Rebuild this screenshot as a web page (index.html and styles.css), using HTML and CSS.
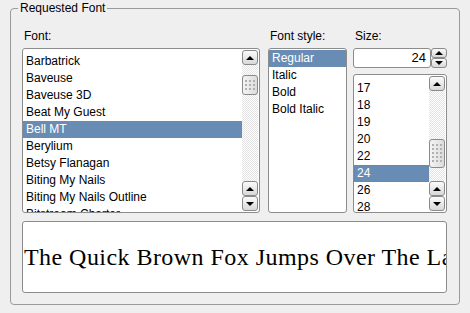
FILE: index.html
```html
<!DOCTYPE html>
<html lang="en">
<head>
  <meta charset="UTF-8" />
  <title>Requested Font</title>
  <link rel="stylesheet" href="styles.css">
</head>
<body>

  <fieldset class="group">
    <legend>Requested Font</legend>

    <div class="columns">
      <!-- FONT FAMILY -->
      <div class="col col-font">
        <label class="caption">Font:</label>
        <div class="listbox font-list">
          <ul class="items">
            <li>Barbatrick</li>
            <li>Baveuse</li>
            <li>Baveuse 3D</li>
            <li>Beat My Guest</li>
            <li class="sel">Bell MT</li>
            <li>Berylium</li>
            <li>Betsy Flanagan</li>
            <li>Biting My Nails</li>
            <li>Biting My Nails Outline</li>
            <li>Bitstream Charter</li>
          </ul>
          <div class="scrollbar">
            <span class="sb-btn up"></span>
            <span class="sb-track"><span class="sb-thumb" style="margin-top:10px;height:20px"></span></span>
            <span class="sb-btn up"></span>
            <span class="sb-btn down"></span>
          </div>
        </div>
      </div>

      <!-- FONT STYLE -->
      <div class="col col-style">
        <label class="caption">Font style:</label>
        <div class="listbox style-list">
          <ul class="items">
            <li class="sel">Regular</li>
            <li>Italic</li>
            <li>Bold</li>
            <li>Bold Italic</li>
          </ul>
        </div>
      </div>

      <!-- SIZE -->
      <div class="col col-size">
        <label class="caption">Size:</label>
        <div class="spinbox">
          <span class="spin-field">24</span>
          <span class="spin-btns">
            <span class="spin-btn up"></span>
            <span class="spin-btn down"></span>
          </span>
        </div>
        <div class="listbox size-list">
          <ul class="items">
            <li>17</li>
            <li>18</li>
            <li>19</li>
            <li>20</li>
            <li>22</li>
            <li class="sel focus">24</li>
            <li>26</li>
            <li>28</li>
          </ul>
          <div class="scrollbar">
            <span class="sb-btn up"></span>
            <span class="sb-track"><span class="sb-thumb" style="margin-top:48px;height:29px"></span></span>
            <span class="sb-btn up"></span>
            <span class="sb-btn down"></span>
          </div>
        </div>
      </div>
    </div>

    <div class="preview">The Quick Brown Fox Jumps Over The Lazy Dog</div>
  </fieldset>

</body>
</html>
```

FILE: styles.css
```css
body {
  margin: 0;
  background-color: #efefef;
  color: #000;
  font-family: "Liberation Sans", Arial, sans-serif;
  font-size: 12px;
}
.group {
  width: 450px;
  min-width: 0;
  box-sizing: border-box;
  margin: 1px 0 0 10px;
  padding: 13px 12px 11px 11px;
  border: 1px solid #9a9a9a;
  border-radius: 4px;
}
.group legend {
  margin-left: -4px;
  padding: 0 2px;
  line-height: 14px;
}
.columns {
  display: flex;
}
.col {
  display: flex;
  flex-direction: column;
}
.col-font {
  width: 238px;
}
.col-style {
  width: 79px;
  margin-left: 8px;
}
.col-size {
  width: 94px;
  margin-left: 6px;
}
.caption {
  display: block;
  padding-left: 2px;
  line-height: 16px;
  margin-bottom: 4px;
}
.listbox {
  display: flex;
  height: 165px;
  box-sizing: border-box;
  background-color: #fff;
  border: 1px solid #8c8c8c;
  border-radius: 3px;
  overflow: hidden;
}
.items {
  flex: 1;
  margin: 0;
  padding: 0;
  list-style: none;
  overflow: hidden;
}
.items li {
  height: 17px;
  line-height: 17px;
  padding-left: 3px;
  white-space: nowrap;
}
.items li.sel {
  background-color: #688cb4;
  color: #fff;
}
.items li.focus {
  outline: 1px dotted #9c7a50;
  outline-offset: -1px;
}
.font-list .items {
  padding-top: 4px;
}
.style-list .items {
  padding-top: 1px;
}
.size-list {
  height: 139px;
}
.size-list .items {
  padding-top: 5px;
}

/* scrollbars */
.scrollbar {
  flex: none;
  width: 16px;
  margin: 1px 1px 1px 0;
  display: flex;
  flex-direction: column;
}
.sb-btn, .spin-btn {
  flex: none;
  height: 15px;
  box-sizing: border-box;
  border: 1px solid #8a8a8a;
  border-radius: 3px;
  background: linear-gradient(#fbfbfb, #d8d8d8);
  display: flex;
  align-items: center;
  justify-content: center;
}
.sb-btn::before, .spin-btn::before {
  content: "";
  border-left: 4px solid transparent;
  border-right: 4px solid transparent;
}
.up::before {
  border-bottom: 4px solid #000;
}
.down::before {
  border-top: 4px solid #000;
}
.sb-track {
  flex: 1;
  display: flex;
  flex-direction: column;
  background: repeating-conic-gradient(#e3e3e3 0 25%, #fff 0 50%) 0 0 / 2px 2px;
}
.sb-thumb {
  flex: none;
  box-sizing: border-box;
  border: 1px solid #8a8a8a;
  border-radius: 3px;
  background: linear-gradient(90deg, #f4f4f4, #dcdcdc);
  display: flex;
  align-items: center;
  justify-content: center;
}
.sb-thumb::before {
  content: "";
  width: 11px;
  height: calc(100% - 8px);
  background: radial-gradient(circle at 1px 1px, #b0b0b0 0.9px, transparent 1px) 0 0 / 4px 4px;
}

/* size spinbox */
.spinbox {
  display: flex;
  height: 20px;
  margin-bottom: 6px;
}
.spin-field {
  flex: 1;
  box-sizing: border-box;
  background-color: #fff;
  border: 1px solid #8c8c8c;
  border-radius: 3px;
  padding-right: 4px;
  text-align: right;
  font-size: 13px;
  line-height: 18px;
}
.spin-btns {
  width: 16px;
  display: flex;
  flex-direction: column;
}
.spin-btn {
  height: 10px;
}

/* preview */
.preview {
  margin-top: 8px;
  height: 72px;
  box-sizing: border-box;
  padding-left: 1px;
  background-color: #fff;
  border: 1px solid #8c8c8c;
  border-radius: 3px;
  display: flex;
  align-items: center;
  overflow: hidden;
  white-space: nowrap;
  font-family: "Liberation Serif", "Times New Roman", serif;
  font-size: 24px;
  letter-spacing: 0.45px;
}
```
